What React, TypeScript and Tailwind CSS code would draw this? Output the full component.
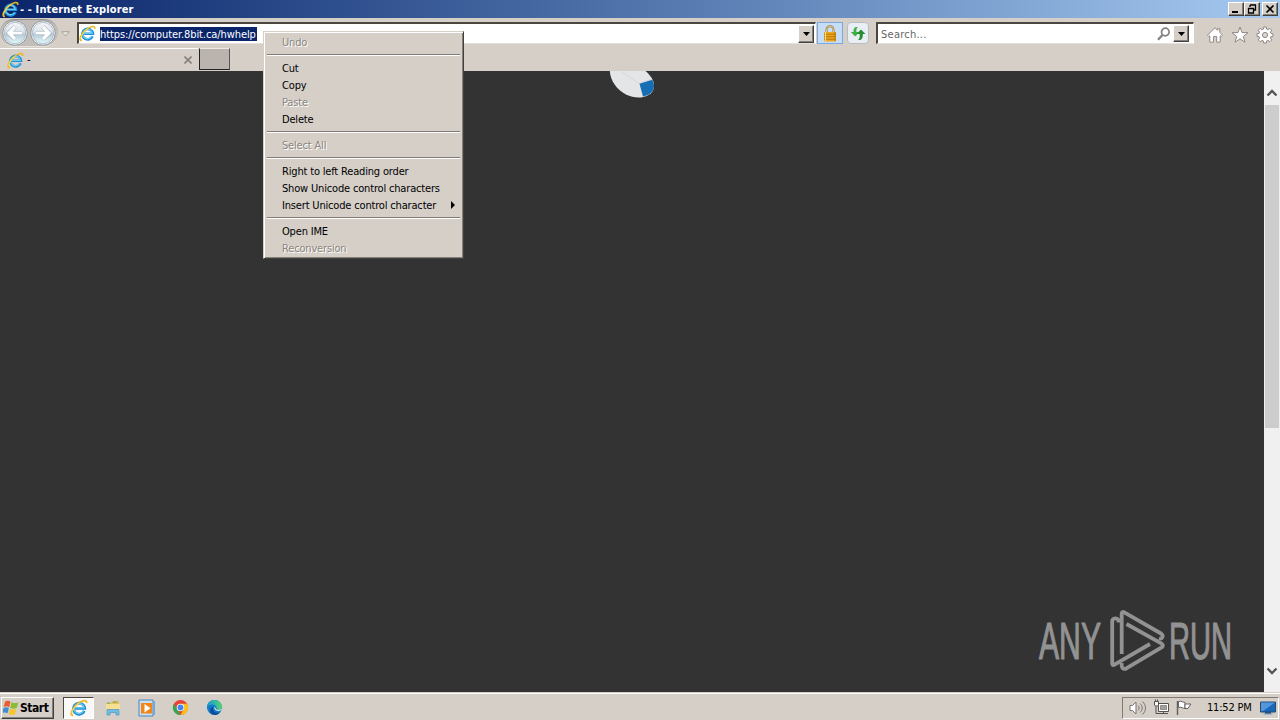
import type { ReactNode } from "react";

const IeLogo = ({ className }: { className: string }) => (
  <svg viewBox="0 0 18 18" className={className} fill="none">
    <path d="M14.3 11.9A5.600 5.600 0 1 1 14.700 9.300H4.500" stroke="#1c8fd6" strokeWidth="2.800" />
    <path d="M13.400 12A5 5 0 1 1 14 8.900H5" stroke="#6bcaf2" strokeWidth="1.400" />
    <path
      d="M3.100 16.200C-1 16.800 2 9 8 4.600c4.600-3.500 9.200-4.300 8.600-.5"
      stroke="#e9b923"
      strokeWidth="1.800"
    />
    <path d="M2.100 14.800C1.500 12 5 7.200 9 4.200" stroke="#fce875" strokeWidth=".8" />
  </svg>
);

const NavCircle = ({ back }: { back?: boolean }) => (
  <svg viewBox="0 0 28 28" className="h-7 w-7 shrink-0">
    <defs>
      <linearGradient id="nav" x1="0" y1="0" x2="0" y2="1">
        <stop offset="0" stopColor="#f4f6f8" />
        <stop offset=".45" stopColor="#dbe2e9" />
        <stop offset=".55" stopColor="#b5c8d6" />
        <stop offset="1" stopColor="#e4fafe" />
      </linearGradient>
    </defs>
    <circle cx="14" cy="14" r="12.300" fill="#f4f5f6" stroke="#8e989f" />
    <circle cx="14" cy="14" r="10.700" fill="url(#nav)" stroke="#a3b5c3" strokeWidth=".8" />
    <path
      d={back ? "M21 14H9M14 8l-6 6 6 6" : "M7 14h12M14 8l6 6-6 6"}
      stroke="#93a6b5"
      strokeWidth="4.200"
      fill="none"
    />
    <path
      d={back ? "M21 14H9M14 8l-6 6 6 6" : "M7 14h12M14 8l6 6-6 6"}
      stroke="#fff"
      strokeWidth="3.200"
      fill="none"
    />
  </svg>
);

const raised =
  "border border-t-white border-l-white border-r-[#404040] border-b-[#404040] bg-[#d5cfc8] shadow-[inset_-1px_-1px_0_#858078]";

const DropButton = ({ className }: { className: string }) => (
  <div className={`${raised} flex shrink-0 items-center justify-center ${className}`}>
    <svg viewBox="0 0 7 4" className="h-1 w-[7px]">
      <path d="M0 0h7L3.500 4z" fill="#000" />
    </svg>
  </div>
);

const WindowButton = ({ children, className = "" }: { children: ReactNode; className?: string }) => (
  <div className={`${raised} h-[14px] w-4 ${className}`}>
    <svg viewBox="0 0 14 12" className="h-3 w-[14px]" fill="none" stroke="#000">
      {children}
    </svg>
  </div>
);

const TitleBar = () => (
  <div className="flex h-[18px] items-center bg-linear-to-r from-[#0a246a] to-[#a6caf0] pr-[2px] pl-[2px]">
    <IeLogo className="h-[17px] w-[17px]" />
    <span className="ml-[1px] pt-[2px] text-[11px] font-bold tracking-[0.12px] whitespace-pre text-white">
      - - Internet Explorer
    </span>
    <div className="ml-auto flex">
      <WindowButton>
        <path d="M3 9h6" strokeWidth="2" />
      </WindowButton>
      <WindowButton>
        <path d="M5 2h6M5 2v2M10.500 2v5H9M3 5.500h6M3.500 5v5h5V5" strokeWidth="1.300" />
      </WindowButton>
      <WindowButton className="ml-[2px]">
        <path d="M3.500 2.500l7 7M10.500 2.500l-7 7" strokeWidth="1.700" />
      </WindowButton>
    </div>
  </div>
);

const field =
  "flex h-[22px] items-center border-t-2 border-l-2 border-r border-b border-t-[#4c4640] border-l-[#4c4640] border-r-white border-b-[#e5e0da] bg-white";

const AddressRow = () => (
  <div className="flex h-[30px] pt-[1px]">
    <div className="flex h-7 w-[58px] shrink-0 rounded-full border-t border-b border-t-[#9b9590] border-b-[#e3dfda] bg-[#c3beb9]">
      <div className="-mt-px ml-[1px] flex">
        <NavCircle back />
        <NavCircle />
      </div>
    </div>
    <svg viewBox="0 0 9 6" className="mt-3 ml-[3px] h-[6px] w-[9px]">
      <path d="M.7.7h7.600L4.500 5z" fill="#e9e5e0" stroke="#aaa49c" />
    </svg>
    <div className={`${field} mt-[3px] ml-[7px] w-[739px] pr-px`}>
      <IeLogo className="h-[17px] w-[17px]" />
      <span className="ml-1 h-[14px] w-[157px] bg-[#0a246a] text-[11px] leading-[15px] tracking-[-0.08px] whitespace-nowrap text-white">
        https://computer.8bit.ca/hwhelp
      </span>
      <DropButton className="ml-auto h-[18px] w-4" />
    </div>
    <div className="mt-[3px] ml-[1px] flex h-[22px] w-[26px] items-center justify-center border border-[#7aa9df] bg-[#c6ddf7]">
      <svg viewBox="0 0 14 17" className="h-[17px] w-[14px]">
        <path d="M3.500 8V4.800a3.500 3.500 0 0 1 7 0V8" fill="none" stroke="#a27a32" strokeWidth="2" />
        <path d="M3.500 8V4.800a3.500 3.500 0 0 1 7 0V8" fill="none" stroke="#e9d69b" strokeWidth=".8" />
        <path d="M1 7h12v9.500H1z" fill="#eca91d" />
        <path d="M1 9.200h12M1 11.700h12M1 14.200h12" stroke="#a96b0b" strokeWidth=".8" />
        <path d="M2.500 7v9" stroke="#ffe28a" />
        <path d="M12 7v9" stroke="#b4760a" />
      </svg>
    </div>
    <div className="mt-[3px] ml-[4px] flex h-[22px] w-[22px] items-center justify-center rounded-sm border border-[#b8bcc1] bg-[#e8eef4]">
      <svg viewBox="0 0 16 16" className="h-4 w-4">
        <path d="M8 2C4.500 1.500 3.200 3.500 3.500 7H.8l4.400 4.500L9.500 7H6.400C6.200 4.500 6.500 3.200 8 2z" fill="#3fae48" />
        <path d="M8 15c3.500.5 5-1.500 4.800-6h2.700L11 4.500 6.500 9h3.200c.2 3.500 0 4.800-1.700 6z" fill="#238f31" />
      </svg>
    </div>
    <div className={`${field} mt-[3px] ml-[7px] w-[318px] pr-1`}>
      <span className="ml-[3px] pt-[3px] text-[11px] tracking-[0.25px] text-[#666]">Search...</span>
      <svg viewBox="0 0 14 14" className="ml-auto h-[14px] w-[14px]" fill="none" stroke="#85817e">
        <circle cx="8.300" cy="5" r="3.800" strokeWidth="1.700" />
        <path d="M5.500 8L1 12.800" strokeWidth="2.300" />
      </svg>
      <DropButton className="ml-[2px] h-[17px] w-4" />
    </div>
    <div className="mt-[7px] ml-[12px] flex gap-[7px]">
      <svg viewBox="0 0 18 18" className="h-[18px] w-[18px]" fill="#fff" stroke="#8d8883">
        <path d="M1.500 9.200L9 1.700l2.600 2.600V2.700h2.200v3.800l2.700 2.700-1.400 1.400-.9-.8v6.400h-3.500v-5.600H7.400v5.600H3.800V9.800l-.9.8z" />
      </svg>
      <svg viewBox="0 0 18 18" className="h-[18px] w-[18px]" fill="#fff" stroke="#8d8883">
        <path d="M9 1l2 5.500 6 .2-4.700 3.700 1.700 5.800L9 12.900l-5 3.300 1.700-5.800L1 6.700l6-.2z" />
      </svg>
      <svg viewBox="0 0 18 18" className="h-[18px] w-[18px]" fill="#fff" stroke="#8d8883">
        <path d="M7.700 1h2.600l.4 2.200 1.200.5 2-1.300 1.800 1.800-1.300 2 .5 1.200 2.100.4v2.500l-2.100.4-.5 1.200 1.300 2-1.800 1.800-2-1.300-1.200.5-.4 2.100H7.700l-.4-2.100-1.200-.5-2 1.300-1.800-1.800 1.300-2-.5-1.200-2.100-.4V7.800l2.100-.4.5-1.200-1.300-2 1.800-1.800 2 1.300 1.200-.5z" />
        <circle cx="9" cy="9" r="2.600" fill="#dcd6d0" />
      </svg>
    </div>
  </div>
);

const TabRow = () => (
  <div className="flex h-[23px]">
    <div className="flex w-[198px] items-center border-t border-white bg-[#d6cfc9] pl-[7px]">
      <IeLogo className="h-[17px] w-[17px]" />
      <span className="ml-[3px] text-[11px]">-</span>
      <svg viewBox="0 0 8 8" className="mr-[6px] ml-auto h-2 w-2">
        <path d="M.5.5l7 7M7.500.5l-7 7" stroke="#86807a" strokeWidth="1.600" />
      </svg>
    </div>
    <div className="ml-[1px] h-[22px] w-[31px] border border-t-[#eeeae6] border-r-[#555] border-b-[#222] border-l-[#222] bg-[#bbb3ae]" />
  </div>
);

const Disc = () => (
  <svg viewBox="0 0 46 28" className="ml-[609px] h-7 w-[46px]">
    <path
      d="M.8 0C1.500 10 8 19 17 23.500c8 4 17 4 23 .2 5-3.200 6-8.500 4.200-13.500C42.500 5.800 39.500 2.500 36.500 0z"
      fill="#e3e5e7"
    />
    <path d="M13 1l17 11.500L42.500 8" fill="none" stroke="#cfd2d5" strokeWidth=".7" />
    <path d="M30.500 12.800l12.700-4c2.500 4.500 2.500 8.800-.2 12-2.100 2.500-5.500 4.300-9 4.600z" fill="#166fb3" />
  </svg>
);

const Watermark = () => (
  <svg
    viewBox="0 0 212 76"
    className="absolute right-4 bottom-2 h-[76px] w-[212px] overflow-visible"
    fill="none"
    stroke="#929292"
    strokeWidth="3.800"
    strokeLinejoin="round"
  >
    <g
      fill="#929292"
      strokeWidth="1.200"
      fontFamily="Liberation Sans Narrow, Liberation Sans, sans-serif"
      fontSize="52"
    >
      <text x="3" y="51" textLength="62" lengthAdjust="spacingAndGlyphs">
        ANY
      </text>
      <text x="133" y="51" textLength="63" lengthAdjust="spacingAndGlyphs">
        RUN
      </text>
    </g>
    <path d="M82.500 14.500v-2.500c-2.500-3-6.300-1.500-6.300 1.500v42c0 1.500 1 2 2.300 1.200L114 36" />
    <path d="M85.700 46V6c0-2 1-2.500 2.600-1.600L125 25.500c3 2 1.500 6-2 4.800" />
    <path d="M85.700 55c-.5 5 1.500 7 5 5.200l34.500-20.500c2.300-1.500 2.300-3 0-4.400L90.500 16" />
  </svg>
);

const Page = () => (
  <main className="flex h-[621px] bg-[#333]">
    <div className="relative flex-1">
      <Disc />
      <Watermark />
    </div>
    <div className="flex w-4 flex-col items-center bg-[#f0f0f0] pt-[18px]">
      <svg viewBox="0 0 12 8" className="h-2 w-3">
        <path d="M1.500 6.500L6 2l4.500 4.500" fill="none" stroke="#555" strokeWidth="2.300" />
      </svg>
      <div className="mt-2 h-[323px] w-[14px] bg-[#cdcdcd]" />
      <svg viewBox="0 0 12 8" className="mt-auto mb-[17px] h-2 w-3">
        <path d="M1.500 1.500L6 6l4.500-4.500" fill="none" stroke="#555" strokeWidth="2.300" />
      </svg>
    </div>
  </main>
);

type Entry = { label: string; disabled?: boolean; arrow?: boolean };

const groups: Entry[][] = [
  [{ label: "Undo", disabled: true }],
  [{ label: "Cut" }, { label: "Copy" }, { label: "Paste", disabled: true }, { label: "Delete" }],
  [{ label: "Select All", disabled: true }],
  [
    { label: "Right to left Reading order" },
    { label: "Show Unicode control characters" },
    { label: "Insert Unicode control character", arrow: true },
  ],
  [{ label: "Open IME" }, { label: "Reconversion", disabled: true }],
];

const ContextMenu = () => (
  <div className="absolute top-[31px] left-[263px] h-[228px] w-[201px] border border-t-[#d5cfc8] border-r-[#404040] border-b-[#404040] border-l-[#d5cfc8] bg-[#d5cfc8] pt-px pr-[3px] pl-[3px] text-[11px] shadow-[inset_1px_1px_0_#fff,inset_-1px_-1px_0_#858078]">
    {groups.map((group, i) => (
      <div key={i}>
        {i > 0 && (
          <div className="mt-[4px] mb-[3px] h-[2px] border-t border-b border-t-[#817b74] border-b-white" />
        )}
        {group.map((item) => (
          <div
            key={item.label}
            className={`flex h-[17px] items-center pt-[4px] pr-[5px] pl-[15px] tracking-[-0.17px] whitespace-nowrap ${
              item.disabled ? "text-[#8b857e] [text-shadow:1px_1px_0_#fff]" : "text-black"
            }`}
          >
            {item.label}
            {item.arrow && (
              <svg viewBox="0 0 4 8" className="mb-1 ml-auto h-2 w-1">
                <path d="M0 0l4 4-4 4z" />
              </svg>
            )}
          </div>
        ))}
      </div>
    ))}
  </div>
);

const Taskbar = () => (
  <footer className="flex h-7 items-center border-t border-[#d5cfc8] bg-[#d5cfc8] pt-[2px] shadow-[inset_0_1px_0_#fff]">
    <div className={`${raised} ml-px flex h-[22px] w-[53px] items-center pl-[1px]`}>
      <svg viewBox="1 1.500 15 13" className="h-4 w-4">
        <path d="M3 2c2-1 3.500-1 5 0L6.800 7.200C5 6 3.500 6.200 1.700 7z" fill="#ec5b2b" />
        <path d="M9 2.500c2 1.200 4 1.200 6.500 0L14 7.800c-2.300 1.200-4.500 1-6.200 0z" fill="#8abd35" />
        <path d="M1.500 8c2-1 3.500-1 5 0l-1.200 5c-2-1.100-3.500-1-5.300 0z" fill="#3d8fda" />
        <path d="M7.500 8.700c2 1.100 4 1.200 6.200 0l-1.400 5c-2.200 1.200-4.300 1-6 0z" fill="#f8c52b" />
      </svg>
      <span className="ml-px text-[12px] font-bold tracking-[-0.45px]">Start</span>
    </div>
    <div className="ml-[9px] flex h-[22px] w-[31px] items-center justify-center border border-t-[#4b4640] border-r-white border-b-white border-l-[#4b4640] bg-[#faf9f7]">
      <IeLogo className="h-[18px] w-[18px]" />
    </div>
    <svg viewBox="0 0 18 18" className="ml-[10px] h-[18px] w-[18px]">
      <path d="M2 4h5l1-2h7v4H2z" fill="#e1bf5b" />
      <path d="M2 5h14v9H2z" fill="#f6df90" />
      <path d="M3 4h3M9 3h4" stroke="#62a86a" />
      <path d="M3 16V10.500h12V16h-3v-2.500H6V16z" fill="#70bce3" stroke="#4695c7" strokeWidth=".7" />
    </svg>
    <svg viewBox="0 0 18 18" className="ml-4 h-[18px] w-[18px]">
      <path d="M1 1h14v16H1z" fill="#c9e0f3" stroke="#4488c0" />
      <path d="M15 2h2v14h-2" fill="#75a9d3" />
      <path d="M3 4h11v10.500H3z" fill="#f38418" />
      <path d="M6.500 5l6 4.200-6 4.300z" fill="#fff" />
    </svg>
    <svg viewBox="0 0 18 18" className="ml-4 h-[17px] w-[17px]">
      <circle cx="9" cy="9" r="8" fill="#e74334" />
      <path d="M2 5l4.500 7.500L9 17A8 8 0 0 1 2 5z" fill="#34a853" />
      <path d="M9 5h7A8 8 0 0 1 9 17l3.500-6z" fill="#fbc116" />
      <circle cx="9" cy="9" r="4" fill="#fff" />
      <circle cx="9" cy="9" r="3.100" fill="#4285f4" />
    </svg>
    <svg viewBox="0 0 18 18" className="ml-[17px] h-[17px] w-[17px]">
      <defs>
        <linearGradient id="edge" x1="0" y1="0" x2="1" y2="0">
          <stop stopColor="#1597db" />
          <stop offset="1" stopColor="#55d66b" />
        </linearGradient>
      </defs>
      <circle cx="9" cy="9" r="8" fill="#1678c8" />
      <path d="M1 8.500C1.500 3.500 5 1 9 1c5 0 8 3.500 8 7 0 3-2.500 4-6 3.500 1-2 0-5-3-5.500-3-.4-5.500 1-7 2.500z" fill="url(#edge)" />
      <path d="M8 8c-2 4 1.500 8 7 6-3 4-8 3.500-10 .5-1.500-3 0-5.500 3-6.500z" fill="#0b4d98" />
      <path d="M9 8c-1 3 2 6 7 4l1-2c-2 1.500-4.500 2-6 1z" fill="#e2e7e7" />
    </svg>

    <div className="mr-px ml-auto flex h-[22px] w-[157px] items-center border border-t-[#817b74] border-r-white border-b-white border-l-[#817b74] pl-[6px]">
      <svg viewBox="0 0 17 16" className="h-4 w-[17px]" fill="none" stroke="#77736f">
        <path d="M1 5.500h2.500L7 2v12l-3.500-3.500H1z" fill="#fff" />
        <path d="M9 5.500c1.500 1.500 1.500 3.500 0 5M11 3.500c3 3 3 6 0 9M13.500 1.500c4 4 4 9 0 13" />
      </svg>
      <svg viewBox="0 0 17 16" className="ml-[7px] h-4 w-[17px] -translate-y-px" stroke="#55514e">
        <path d="M5.500 4.500h10v8h-10z" fill="#fff" />
        <path d="M7.500 6.500h6v4h-6z" fill="#a3a09d" stroke="#8f8c89" />
        <path d="M3 6v8.500h12M10.500 12.500v2" fill="none" />
        <path d="M1.500 2.500h4V6L4.500 7h-2l-1-1z" fill="#fff" />
        <path d="M2.500.5v2M4.500.5v2" />
      </svg>
      <svg viewBox="0 0 17 16" className="ml-[6px] h-4 w-[17px]" fill="#fff" stroke="#66615e">
        <path d="M2.500 1.500c3-1 4.500 1 6.500 1v6c-2 0-3.500-2-6.500-1z" />
        <path d="M9 4h6l-1.500 2L12 8.500H9z" />
        <path d="M1.500 1v14" strokeWidth="1.500" />
      </svg>
      <span className="ml-[14px] w-[46px] pt-[2px] text-[11px] tracking-[-0.2px] whitespace-nowrap">11:52 PM</span>
      <svg viewBox="0 0 16 14" className="ml-[7px] h-[14px] w-4">
        <path d="M.5 1h15v10H.5z" fill="#1767bd" stroke="#29486a" />
        <path d="M1 1.500h14L3 10H1z" fill="#5297db" />
        <path d="M5 11h6v2H5z" fill="#2c5279" />
        <path d="M3.500 13h9" stroke="#7ea2c6" />
      </svg>
    </div>
  </footer>
);

const App = () => {
  return (
    <div className="relative h-[720px] w-[1280px] overflow-hidden bg-[#d5cfc8] font-['DejaVu_Sans_Condensed','DejaVu_Sans',sans-serif] text-black">
      <TitleBar />
      <AddressRow />
      <TabRow />
      <Page />
      <Taskbar />
      <ContextMenu />
    </div>
  );
};

export default App;
